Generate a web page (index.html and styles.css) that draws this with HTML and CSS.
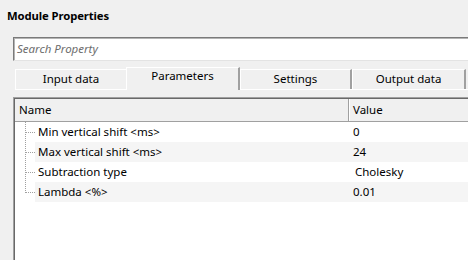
FILE: index.html
```html
<!DOCTYPE html>
<html>
<head>
<meta charset="utf-8">
<link rel="stylesheet" href="styles.css">
</head>
<body>
<div class="page">
  <div class="title">Module Properties</div>
  <div class="search"><span class="placeholder">Search Property</span></div>
  <div class="tabstrip">
    <div class="tab first">Input data</div>
    <div class="tab selected">Parameters</div>
    <div class="tab">Settings</div>
    <div class="tab last">Output data</div>
  </div>
  <div class="grid">
    <div class="header">
      <div class="hname">Name</div>
      <div class="hvalue">Value</div>
    </div>
    <div class="row">
      <svg class="tree" width="20" height="20"><line x1="10.5" y1="0" x2="10.5" y2="20"/><line x1="11" y1="10.5" x2="20" y2="10.5"/></svg>
      <div class="cells"><div class="name">Min vertical shift &lt;ms&gt;</div><div class="value">0</div></div>
    </div>
    <div class="row alt">
      <svg class="tree" width="20" height="20"><line x1="10.5" y1="0" x2="10.5" y2="20"/><line x1="11" y1="10.5" x2="20" y2="10.5"/></svg>
      <div class="cells"><div class="name">Max vertical shift &lt;ms&gt;</div><div class="value">24</div></div>
    </div>
    <div class="row">
      <svg class="tree" width="20" height="20"><line x1="10.5" y1="0" x2="10.5" y2="20"/><line x1="11" y1="10.5" x2="20" y2="10.5"/></svg>
      <div class="cells"><div class="name">Subtraction type</div><div class="value combo">Cholesky</div></div>
    </div>
    <div class="row alt">
      <svg class="tree" width="20" height="20"><line x1="10.5" y1="0" x2="10.5" y2="11"/><line x1="11" y1="10.5" x2="20" y2="10.5"/></svg>
      <div class="cells"><div class="name">Lambda &lt;%&gt;</div><div class="value">0.01</div></div>
    </div>
  </div>
</div>
</body>
</html>
```
FILE: styles.css
```css
html, body {
  margin: 0;
  padding: 0;
  background: #f0f0f0;
  overflow: hidden;
}
.page {
  width: 468px;
  height: 260px;
  overflow: hidden;
  font-family: "Noto Sans", "Liberation Sans", sans-serif;
  font-size: 11.5px;
  color: #000;
}
.title {
  height: 37px;
  box-sizing: border-box;
  padding: 8px 0 0 7px;
  font-weight: bold;
  font-size: 11.3px;
  line-height: 16px;
  letter-spacing: -0.1px;
}
.search {
  margin-left: 13px;
  width: 480px;
  height: 24px;
  box-sizing: border-box;
  background: #fff;
  border-top: 1px solid #7a7a7a;
  border-left: 1px solid #7a7a7a;
  border-bottom: 1px solid #e3e3e3;
  box-shadow: inset 1px 1px 0 #b4b4b4;
  padding-left: 3px;
  line-height: 21px;
}
.placeholder {
  font-style: italic;
  color: #6d6d6d;
}
.tabstrip {
  margin-top: 6px;
  margin-left: 15px;
  width: 470px;
  height: 23px;
  box-sizing: border-box;
  border-bottom: 1px solid #fff;
  display: flex;
  align-items: flex-start;
}
.tab {
  margin-top: 2px;
  height: 20px;
  width: 112px;
  box-sizing: border-box;
  border-top: 1px solid #fff;
  border-left: 1px solid #fff;
  border-right: 2px solid #a0a0a0;
  text-align: center;
  line-height: 18px;
}
.tab.first {
  border-right: none;
  width: 111px;
}
.tab.selected {
  margin-top: 0;
  height: 23px;
  width: 114px;
  background: #f0f0f0;
  line-height: 16px;
  position: relative;
}
.tab.last {
  width: 114px;
}
.grid {
  margin-top: 7px;
  margin-left: 13px;
  width: 480px;
  height: 170px;
  box-sizing: border-box;
  background: #fff;
  border-top: 1px solid #a0a0a0;
  border-left: 1px solid #a0a0a0;
  box-shadow: inset 1px 1px 0 #696969;
  padding: 1px 0 0 1px;
}
.header {
  display: flex;
  height: 23px;
  box-sizing: border-box;
  background: #f0f0f0;
  border-bottom: 1px solid #a0a0a0;
  line-height: 21px;
}
.hname {
  width: 334px;
  box-sizing: border-box;
  padding-left: 4px;
  border-right: 1px solid #a0a0a0;
  box-shadow: 1px 0 0 #fff;
}
.hvalue {
  padding-left: 4px;
}
.row {
  display: flex;
  height: 20px;
  line-height: 20px;
}
.tree {
  flex: none;
  display: block;
}
.tree line {
  stroke: #a0a0a0;
  stroke-width: 1;
  stroke-dasharray: 1 1;
}
.cells {
  flex: 1;
  display: flex;
}
.row.alt .cells {
  background: #f5f5f5;
}
.name {
  width: 314px;
  box-sizing: border-box;
  padding-left: 3px;
}
.value {
  padding-left: 4px;
}
.value.combo {
  padding-left: 6px;
}
```
